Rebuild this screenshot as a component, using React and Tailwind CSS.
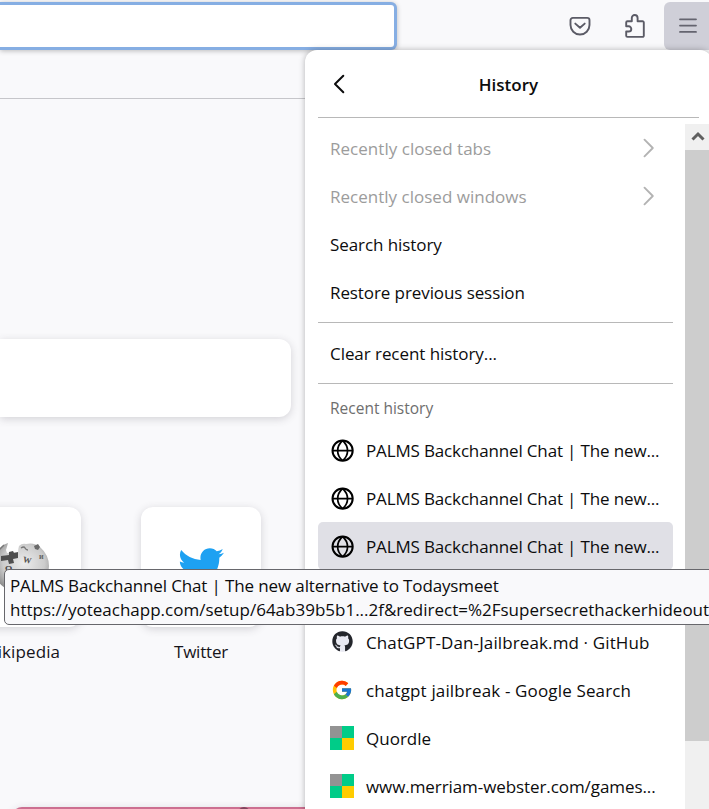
import { FaGithub, FaTwitter } from "react-icons/fa";
import { FcGoogle } from "react-icons/fc";

function PocketIcon() {
  return (
    <svg width="24" height="24" viewBox="0 0 24 24" fill="none" stroke="#5b5b66" strokeWidth="1.9" strokeLinecap="round" strokeLinejoin="round">
      <path d="M4.8 3.9h14.4a2.3 2.3 0 0 1 2.3 2.3v4.8a9.5 9.5 0 0 1-19 0V6.2a2.3 2.3 0 0 1 2.3-2.3z" />
      <path d="M7.3 9.6l4.7 4.2 4.7-4.2" />
    </svg>
  );
}

function PuzzleIcon() {
  return (
    <svg width="25" height="25" viewBox="0 0 25 25" fill="none" stroke="#5b5b66" strokeWidth="1.9" strokeLinejoin="round">
      <path d="M9.8 7.2V3.9a2.9 2.9 0 0 1 5.8 0v3.3h5a1.2 1.2 0 0 1 1.2 1.2v13.3a1.2 1.2 0 0 1-1.2 1.2H5.4a1.2 1.2 0 0 1-1.2-1.2v-4.2h2.5a2.6 2.6 0 0 0 0-5.2H4.2V8.4a1.2 1.2 0 0 1 1.2-1.2z" />
    </svg>
  );
}

function MenuIcon() {
  return (
    <svg width="20" height="18" viewBox="0 0 20 18" stroke="#64646f" strokeWidth="1.8" strokeLinecap="round">
      <path d="M2 2.3h16M2 8.6h16M2 14.9h16" />
    </svg>
  );
}

function GlobeIcon() {
  return (
    <svg width="24" height="24" viewBox="0 0 24 24" fill="none" stroke="#000" strokeWidth="1.7">
      <circle cx="12.6" cy="12.6" r="10.1" strokeWidth="2" />
      <path d="M2.5 12.6h20.2M12.6 2.5c-6.6 6-6.6 14.6 0 20.2M12.6 2.5c6.6 6 6.6 14.6 0 20.2" />
    </svg>
  );
}

function GitHubMark() {
  return (
    <span className="flex h-[23px] w-6 items-center justify-center">
      <span className="flex size-[21px] items-center justify-center rounded-full bg-[#e9eaf2]">
        <FaGithub className="size-[21px] text-[#24262b]" />
      </span>
    </span>
  );
}

function GoogleMark() {
  return (
    <span className="flex h-6 w-[23px] items-center justify-center">
      <FcGoogle className="size-[22px]" />
    </span>
  );
}

function QuordleMark() {
  return (
    <span className="grid size-6 grid-cols-2">
      <span className="bg-[#939393]" />
      <span className="bg-[#00cc88]" />
      <span className="bg-[#00cc88]" />
      <span className="bg-[#ffcc00]" />
    </span>
  );
}

function WikipediaGlobe() {
  return (
    <svg width="60" height="60" viewBox="0 0 60 60">
      <defs>
        <radialGradient id="ball" cx="0.55" cy="0.4" r="0.62">
          <stop offset="0" stopColor="#ececec" />
          <stop offset="0.6" stopColor="#cccccc" />
          <stop offset="1" stopColor="#858585" />
        </radialGradient>
      </defs>
      <path d="M10 10q3-3 7-4-1 4-2 7l1 3 8-1 3 1q0-4 1-7 3-3 7-2 8-2 14 3 9 8 9 19a28 27 0 0 1-56 0Q3 17 10 10z" fill="url(#ball)" />
      <path d="M10 19l8-1v-3l4-1 1 2 4-1v6l-5 1 1 4-5 1-1-4-7 1z" fill="#4f4f4f" />
      <path d="M43 9l4-2 2 3-2 3-3-1z" fill="#6a6a6a" />
      <path d="M30 11q3-2 4 0t3 2M8 13l5-5" fill="none" stroke="#777" strokeWidth="1.4" />
      <text x="32" y="26" fontSize="8.5" fontFamily="Liberation Serif, serif" fontWeight="bold" fill="#555" transform="rotate(12 36 23)">W</text>
      <text x="14" y="35" fontSize="9" fontFamily="Liberation Serif, serif" fontWeight="bold" fill="#444">Ω</text>
      <text x="48" y="22" fontSize="8" fontFamily="Liberation Serif, serif" fontWeight="bold" fill="#666">и</text>
    </svg>
  );
}

function Chevron() {
  return (
    <svg width="12" height="20" viewBox="0 0 12 20" fill="none" stroke="#b3b3b3" strokeWidth="1.9" strokeLinecap="round" strokeLinejoin="round">
      <path d="M1.5 1.7l8.3 8.3-8.3 8.3" />
    </svg>
  );
}

function Row({ icon, label, tracking, disabled, active }) {
  return (
    <div className={`flex h-12 w-[355px] shrink-0 items-center rounded-[5px] px-3 ${active ? "bg-[#e0e0e6]" : ""} ${disabled ? "text-[#9c9c9c]" : "text-[#0c0c0d]"}`}>
      {icon && <span className="mr-3 flex size-6 shrink-0">{icon}</span>}
      <span className={`pt-0.5 whitespace-nowrap ${tracking}`}>{label}</span>
      {disabled && <span className="mr-1.5 ml-auto"><Chevron /></span>}
    </div>
  );
}

function Separator() {
  return <div className="my-1.5 h-px w-[355px] shrink-0 bg-[#b8b8b8]" />;
}

function HistoryPanel() {
  return (
    <section className="absolute top-[50px] left-[305px] flex h-[780px] w-[407px] flex-col rounded-[12px] bg-white shadow-[0_0_6px_rgba(0,0,0,0.28)]">
      <header className="mr-[13px] ml-[13px] flex h-[68px] shrink-0 items-center border-b border-[#b8b8b8]">
        <svg className="ml-[15px]" width="13" height="20" viewBox="0 0 13 20" fill="none" stroke="#0c0c0d" strokeWidth="2" strokeLinecap="round" strokeLinejoin="round">
          <path d="M10.3 1.7L2 10l8.3 8.3" />
        </svg>
        <h1 className="mr-7 flex-1 pt-0.5 text-center text-[17px] font-semibold text-[#0c0c0d]">History</h1>
      </header>
      <div className="mt-1.5 flex min-h-0 flex-1 justify-between pl-[13px]">
        <div className="flex flex-col">
          <Row label="Recently closed tabs" disabled tracking="tracking-[0.03px]" />
          <Row label="Recently closed windows" disabled tracking="tracking-[0.01px]" />
          <Row label="Search history" tracking="tracking-[-0.08px]" />
          <Row label="Restore previous session" tracking="tracking-[-0.09px]" />
          <Separator />
          <Row label="Clear recent history..." tracking="tracking-[-0.06px]" />
          <Separator />
          <h2 className="flex h-9 shrink-0 items-center px-3 text-[15.5px] text-[#6e6e6e]">Recent history</h2>
          <Row icon={<GlobeIcon />} label="PALMS Backchannel Chat | The new..." tracking="tracking-[-0.15px]" />
          <Row icon={<GlobeIcon />} label="PALMS Backchannel Chat | The new..." tracking="tracking-[-0.15px]" />
          <Row icon={<GlobeIcon />} label="PALMS Backchannel Chat | The new..." tracking="tracking-[-0.15px]" active />
          <div className="h-12 shrink-0" />
          <Row icon={<GitHubMark />} label="ChatGPT-Dan-Jailbreak.md · GitHub" tracking="tracking-[0.12px]" />
          <Row icon={<GoogleMark />} label="chatgpt jailbreak - Google Search" tracking="tracking-[0.15px]" />
          <Row icon={<QuordleMark />} label="Quordle" tracking="tracking-normal" />
          <Row icon={<QuordleMark />} label="www.merriam-webster.com/games..." tracking="tracking-[-0.08px]" />
        </div>
        <div className="flex w-[27px] flex-col bg-[#f0f0f0]">
          <div className="flex h-[26px] shrink-0 items-center pl-1.5">
            <svg width="14" height="12" viewBox="0 0 14 12" fill="none" stroke="#606060" strokeWidth="3">
              <path d="M1.5 8.5L7 3l5.5 5.5" />
            </svg>
          </div>
          <div className="h-[591px] bg-[#cdcdcd]" />
        </div>
      </div>
    </section>
  );
}

export default function App() {
  return (
    <main className="relative h-[809px] w-[709px] overflow-hidden bg-[#f9f9fb] font-['Open_Sans',sans-serif] text-[17px] leading-6">
      <div className="flex h-[99px] items-start border-b border-[#c6c6ca] pt-0.5">
        <div className="h-12 w-[397px] shrink-0 rounded-r-[6px] border-[3px] border-l-0 border-[#86aee3] bg-white shadow-[0_1px_5px_rgba(0,0,0,0.25)]" />
        <div className="ml-[171px] flex h-12 shrink-0 items-center"><PocketIcon /></div>
        <div className="ml-[30px] flex h-12 shrink-0 items-center"><PuzzleIcon /></div>
        <div className="ml-[17px] flex h-12 w-[50px] shrink-0 items-center rounded-[6px] bg-[#cfcfd8] pl-3.5"><MenuIcon /></div>
      </div>

      <div className="mt-[240px] h-[78px] w-[291px] rounded-r-[12px] bg-white shadow-[0_2px_9px_rgba(58,57,68,0.2)]" />

      <div className="mt-[90px] -ml-[39px] flex gap-[60px] text-[#15141a]">
        <div className="flex w-[120px] flex-col items-center">
          <div className="flex size-[120px] items-center justify-center rounded-[12px] bg-white shadow-[0_2px_9px_rgba(58,57,68,0.2)]"><WikipediaGlobe /></div>
          <span className="mt-[13px] tracking-[0.1px]">Wikipedia</span>
        </div>
        <div className="flex w-[120px] flex-col items-center">
          <div className="flex size-[120px] items-center justify-center rounded-[12px] bg-white shadow-[0_2px_9px_rgba(58,57,68,0.2)]"><FaTwitter className="size-[46px] text-[#1da1f2]" /></div>
          <span className="mt-[13px] tracking-[-0.2px]">Twitter</span>
        </div>
      </div>

      <div className="mt-[143px] ml-3 flex h-10 w-[400px] rounded-[10px] bg-[#cc6f90] shadow-[0_2px_9px_rgba(58,57,68,0.2)]">
        <div className="ml-[226px] h-3 w-3 rounded-full bg-[#80465c]" />
      </div>

      <HistoryPanel />

      <div className="absolute top-[569px] left-1 h-[56px] w-[740px] rounded-[5px] border border-[#67676c] bg-[#f9f9fb] pt-1 pl-[5px] whitespace-nowrap text-[#0c0c0d]">
        <div className="tracking-[-0.13px]">PALMS Backchannel Chat | The new alternative to Todaysmeet</div>
        <div>https://yoteachapp.com/setup/64ab39b5b1...2f&amp;redirect=%2Fsupersecrethackerhideout</div>
      </div>
    </main>
  );
}
